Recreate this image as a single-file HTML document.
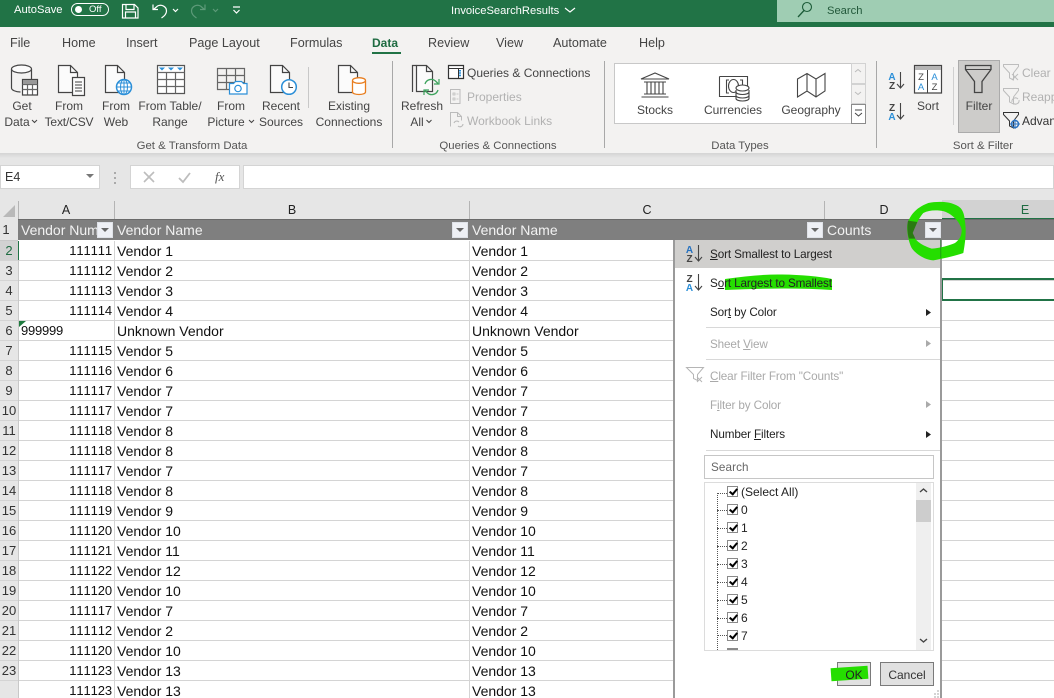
<!DOCTYPE html>
<html><head><meta charset="utf-8"><style>
html,body{margin:0;padding:0;width:1054px;height:698px;overflow:hidden}
body{position:relative;background:#fff;font-family:"Liberation Sans",sans-serif;color:#333}
div,span,svg{box-sizing:border-box}
.t{position:absolute;white-space:nowrap;line-height:14px;font-size:12px;color:#444}
.c{transform:translateX(-50%);text-align:center}
.tab{top:36px;font-size:12.6px;color:#444}
.g{font-size:11.4px;top:139px;color:#555}
.dis{color:#b1b1b1}
.box{position:absolute}
.r{position:absolute;left:0;width:1054px;height:20px;border-bottom:1px solid #d4d4d4;font-size:14px;line-height:20px;color:#111}
.r span{position:absolute;white-space:nowrap;top:0}
.h{left:0;width:18px;background:#e6e6e6;height:19px;text-align:center;font-size:13px;color:#333}
.a{right:942px;font-size:13px;font-kerning:none;letter-spacing:-.1px}
.b{left:117px}.cc{left:472px}
.fb{position:absolute;top:222px;width:16px;height:16px;background:#eef0f5;border:1px solid #dfe2e8}
.fb:after{content:"";position:absolute;left:3px;top:5px;border:4px solid transparent;border-top:4px solid #666;border-bottom:0}
.m{position:absolute;left:710px;font-size:11.7px;letter-spacing:-.12px;line-height:14px;color:#222;white-space:nowrap}
.m.dis{color:#a9a9a9}
.sep{position:absolute;left:706px;width:234px;height:1px;background:#d8d8d8}
.li{position:absolute;left:741px;font-size:12px;line-height:14px;color:#222;white-space:nowrap}
.cb{position:absolute;left:727px;width:11px;height:11px;border:1px solid #8a8a8a;background:#fff}
.cb:after{content:"";position:absolute;left:3px;top:0;width:3px;height:6px;border:solid #000;border-width:0 2px 2px 0;transform:rotate(40deg)}
</style></head><body>
<!-- title bar -->
<div class="box" style="left:0;top:0;width:1054px;height:27px;background:#217346"></div>
<div class="box" style="left:777px;top:0;width:277px;height:22px;background:#9fcdb3"></div>
<div class="t" style="left:14px;top:3px;color:#fff;font-size:11.2px">AutoSave</div>
<div class="box" style="left:71px;top:3px;width:38px;height:13px;border:1px solid #fff;border-radius:7px"></div>
<div class="box" style="left:75px;top:6px;width:7px;height:7px;background:#fff;border-radius:50%"></div>
<div class="t" style="left:89px;top:3px;color:#fff;font-size:9.5px">Off</div>
<div class="t" style="left:451px;top:4px;color:#fff;font-size:11.2px">InvoiceSearchResults</div>
<div class="t" style="left:827px;top:4px;color:#22583a;font-size:11.2px">Search</div>
<!-- ribbon -->
<div class="box" style="left:0;top:27px;width:1054px;height:126px;background:#f3f2f1"></div>
<div class="box" style="left:0;top:153px;width:1054px;height:47px;background:#e6e6e6"></div>
<div class="box" style="left:0;top:153px;width:1054px;height:5px;background:linear-gradient(#d4d4d4,#e6e6e6)"></div>
<div class="t tab" style="left:10px">File</div>
<div class="t tab" style="left:62px">Home</div>
<div class="t tab" style="left:126px">Insert</div>
<div class="t tab" style="left:189px">Page Layout</div>
<div class="t tab" style="left:290px">Formulas</div>
<div class="t tab" style="left:372px;color:#1e6b41;font-weight:bold;font-size:12px">Data</div>
<div class="box" style="left:372px;top:52px;width:29px;height:2px;background:#217346"></div>
<div class="t tab" style="left:428px">Review</div>
<div class="t tab" style="left:496px">View</div>
<div class="t tab" style="left:553px">Automate</div>
<div class="t tab" style="left:639px">Help</div>

<div class="t c" style="left:22px;top:99px">Get</div>
<div class="t c" style="left:17px;top:115px">Data</div>
<div class="t c" style="left:69px;top:99px">From</div>
<div class="t c" style="left:69px;top:115px;letter-spacing:-.15px">Text/CSV</div>
<div class="t c" style="left:116px;top:99px">From</div>
<div class="t c" style="left:116px;top:115px">Web</div>
<div class="t c" style="left:170px;top:99px">From Table/</div>
<div class="t c" style="left:170px;top:115px">Range</div>
<div class="t c" style="left:231px;top:99px">From</div>
<div class="t c" style="left:226px;top:115px">Picture</div>
<div class="t c" style="left:281px;top:99px">Recent</div>
<div class="t c" style="left:281px;top:115px">Sources</div>
<div class="t c" style="left:349px;top:99px">Existing</div>
<div class="t c" style="left:349px;top:115px">Connections</div>
<div class="t g c" style="left:192px">Get &amp; Transform Data</div>
<div class="t c" style="left:422px;top:99px">Refresh</div>
<div class="t c" style="left:417px;top:115px">All</div>
<div class="t" style="left:467px;top:66px">Queries &amp; Connections</div>
<div class="t dis" style="left:467px;top:90px">Properties</div>
<div class="t dis" style="left:467px;top:114px">Workbook Links</div>
<div class="t g c" style="left:498px">Queries &amp; Connections</div>
<div class="box" style="left:614px;top:63px;width:252px;height:61px;background:#fff;border:1px solid #c8c8c8;border-right:0"></div>
<div class="box" style="left:851px;top:63px;width:15px;height:21px;background:#f3f2f1;border:1px solid #d2d2d2"></div>
<div class="box" style="left:851px;top:84px;width:15px;height:20px;background:#f3f2f1;border:1px solid #d2d2d2"></div>
<div class="box" style="left:851px;top:104px;width:15px;height:20px;background:#fff;border:1px solid #8b8b8b"></div>
<div class="t c" style="left:655px;top:103px">Stocks</div>
<div class="t c" style="left:733px;top:103px">Currencies</div>
<div class="t c" style="left:811px;top:103px">Geography</div>
<div class="t g c" style="left:740px">Data Types</div>
<div class="t c" style="left:928px;top:99px">Sort</div>
<div class="box" style="left:958px;top:60px;width:42px;height:73px;background:#cdccca;border:1px solid #ababab"></div>
<div class="t c" style="left:979px;top:99px">Filter</div>
<div class="t dis" style="left:1022px;top:66px">Clear</div>
<div class="t dis" style="left:1022px;top:90px">Reapply</div>
<div class="t" style="left:1022px;top:114px;color:#333">Advanced</div>
<div class="t g c" style="left:983px">Sort &amp; Filter</div>

<!-- formula bar -->
<div class="box" style="left:0;top:165px;width:100px;height:24px;background:#fff;border:1px solid #d4d4d4"></div>
<div class="t" style="left:5px;top:170px;font-size:12.5px;color:#333">E4</div>
<div class="box" style="left:130px;top:165px;width:110px;height:24px;background:#fff;border:1px solid #d4d4d4"></div>
<div class="box" style="left:243px;top:165px;width:811px;height:24px;background:#fff;border:1px solid #d4d4d4"></div>

<!-- column headers -->
<div class="box" style="left:0;top:200px;width:1054px;height:20px;background:#e6e6e6"></div>
<div class="box" style="left:942px;top:200px;width:112px;height:20px;background:#d2d2d2"></div>
<div class="box" style="left:942px;top:218px;width:112px;height:2px;background:#217346"></div>
<div class="box" style="left:114px;top:201px;width:1px;height:19px;background:#b4b4b4"></div>
<div class="box" style="left:469px;top:201px;width:1px;height:19px;background:#b4b4b4"></div>
<div class="box" style="left:824px;top:201px;width:1px;height:19px;background:#b4b4b4"></div>
<div class="box" style="left:18px;top:201px;width:1px;height:19px;background:#b4b4b4"></div>
<div class="t c" style="left:66px;top:203px;font-size:12.5px;color:#222">A</div>
<div class="t c" style="left:292px;top:203px;font-size:12.5px;color:#222">B</div>
<div class="t c" style="left:647px;top:203px;font-size:12.5px;color:#222">C</div>
<div class="t c" style="left:884px;top:203px;font-size:12.5px;color:#222">D</div>
<div class="t c" style="left:1025px;top:203px;font-size:12.5px;color:#1e6b41">E</div>

<!-- rows -->
<div class="box" style="left:0;top:220px;width:18px;height:21px;background:#e6e6e6;border-bottom:1px solid #c8c8c8"></div>
<div class="t c" style="left:6px;top:223px;font-size:13px;color:#333">1</div>
<div class="box" style="left:18px;top:219px;width:1036px;height:21px;background:#7f7f7f;border-top:1px solid #6a6a6a"></div>
<div class="t" style="left:21px;top:223px;width:77px;overflow:hidden;font-size:14px;color:#f2f2f2">Vendor Number</div>
<div class="t" style="left:117px;top:223px;font-size:14px;color:#f2f2f2">Vendor Name</div>
<div class="t" style="left:472px;top:223px;font-size:14px;color:#f2f2f2">Vendor Name</div>
<div class="t" style="left:827px;top:223px;font-size:14px;color:#f2f2f2">Counts</div>
<div class="fb" style="left:97px"></div><div class="fb" style="left:452px"></div><div class="fb" style="left:807px"></div><div class="fb" style="left:925px"></div>

<div class="r" style="top:241px"><span class="h" style="background:#d2d2d2;color:#1e6b41">2</span><span class="a">111111</span><span class="b">Vendor 1</span><span class="cc">Vendor 1</span></div>
<div class="r" style="top:261px"><span class="h">3</span><span class="a">111112</span><span class="b">Vendor 2</span><span class="cc">Vendor 2</span></div>
<div class="r" style="top:281px"><span class="h">4</span><span class="a">111113</span><span class="b">Vendor 3</span><span class="cc">Vendor 3</span></div>
<div class="r" style="top:301px"><span class="h">5</span><span class="a">111114</span><span class="b">Vendor 4</span><span class="cc">Vendor 4</span></div>
<div class="r" style="top:321px"><span class="h">6</span><span style="left:21px;font-size:13px;letter-spacing:-.23px">999999</span><span class="b">Unknown Vendor</span><span class="cc">Unknown Vendor</span></div>
<div class="r" style="top:341px"><span class="h">7</span><span class="a">111115</span><span class="b">Vendor 5</span><span class="cc">Vendor 5</span></div>
<div class="r" style="top:361px"><span class="h">8</span><span class="a">111116</span><span class="b">Vendor 6</span><span class="cc">Vendor 6</span></div>
<div class="r" style="top:381px"><span class="h">9</span><span class="a">111117</span><span class="b">Vendor 7</span><span class="cc">Vendor 7</span></div>
<div class="r" style="top:401px"><span class="h">10</span><span class="a">111117</span><span class="b">Vendor 7</span><span class="cc">Vendor 7</span></div>
<div class="r" style="top:421px"><span class="h">11</span><span class="a">111118</span><span class="b">Vendor 8</span><span class="cc">Vendor 8</span></div>
<div class="r" style="top:441px"><span class="h">12</span><span class="a">111118</span><span class="b">Vendor 8</span><span class="cc">Vendor 8</span></div>
<div class="r" style="top:461px"><span class="h">13</span><span class="a">111117</span><span class="b">Vendor 7</span><span class="cc">Vendor 7</span></div>
<div class="r" style="top:481px"><span class="h">14</span><span class="a">111118</span><span class="b">Vendor 8</span><span class="cc">Vendor 8</span></div>
<div class="r" style="top:501px"><span class="h">15</span><span class="a">111119</span><span class="b">Vendor 9</span><span class="cc">Vendor 9</span></div>
<div class="r" style="top:521px"><span class="h">16</span><span class="a">111120</span><span class="b">Vendor 10</span><span class="cc">Vendor 10</span></div>
<div class="r" style="top:541px"><span class="h">17</span><span class="a">111121</span><span class="b">Vendor 11</span><span class="cc">Vendor 11</span></div>
<div class="r" style="top:561px"><span class="h">18</span><span class="a">111122</span><span class="b">Vendor 12</span><span class="cc">Vendor 12</span></div>
<div class="r" style="top:581px"><span class="h">19</span><span class="a">111120</span><span class="b">Vendor 10</span><span class="cc">Vendor 10</span></div>
<div class="r" style="top:601px"><span class="h">20</span><span class="a">111117</span><span class="b">Vendor 7</span><span class="cc">Vendor 7</span></div>
<div class="r" style="top:621px"><span class="h">21</span><span class="a">111112</span><span class="b">Vendor 2</span><span class="cc">Vendor 2</span></div>
<div class="r" style="top:641px"><span class="h">22</span><span class="a">111120</span><span class="b">Vendor 10</span><span class="cc">Vendor 10</span></div>
<div class="r" style="top:661px"><span class="h">23</span><span class="a">111123</span><span class="b">Vendor 13</span><span class="cc">Vendor 13</span></div>
<div class="r" style="top:681px"><span class="h"></span><span class="a">111123</span><span class="b">Vendor 13</span><span class="cc">Vendor 13</span></div>

<div class="box" style="left:18px;top:241px;width:1px;height:457px;background:#c8c8c8"></div>
<div class="box" style="left:18px;top:241px;width:1px;height:19px;background:#217346"></div>
<div class="box" style="left:114px;top:241px;width:1px;height:457px;background:#d4d4d4"></div>
<div class="box" style="left:469px;top:241px;width:1px;height:457px;background:#d4d4d4"></div>
<div class="box" style="left:941px;top:278px;width:113px;height:23px;border:2px solid #217346;border-right:0"></div>

<!-- filter menu -->
<div class="box" style="left:673px;top:240px;width:269px;height:458px;background:#fff;border-left:2px solid #9a9a9a;border-right:2px solid #9a9a9a"></div>
<div class="box" style="left:675px;top:240px;width:265px;height:28px;background:#d0cfcd"></div>
<div class="m" style="top:248px"><u>S</u>ort Smallest to Largest</div>
<svg width="120" height="24" viewBox="720 270 120 24" style="position:absolute;left:720px;top:270px"><path fill="#25de00" d="M725 279Q760 274 782 274.500Q812 275 832 279L832 290Q790 287 725 290z"/></svg>
<div class="m" style="top:277px">S<u>o</u>rt Largest to Smallest</div>
<div class="m" style="top:306px">Sor<u>t</u> by Color</div>
<div class="sep" style="top:327px"></div>
<div class="m dis" style="top:338px">Sheet <u>V</u>iew</div>
<div class="sep" style="top:359px"></div>
<div class="m dis" style="top:370px"><u>C</u>lear Filter From "Counts"</div>
<div class="m dis" style="top:399px">F<u>i</u>lter by Color</div>
<div class="m" style="top:428px">Number <u>F</u>ilters</div>
<div class="sep" style="top:450px"></div>
<div class="box" style="left:704px;top:455px;width:230px;height:24px;border:1px solid #c6c6c6;background:#fff"></div>
<div class="m" style="left:711px;top:461px;color:#666;letter-spacing:.1px">Search</div>
<div class="box" style="left:704px;top:482px;width:230px;height:169px;border:1px solid #dcdcdc;background:#fff"></div>
<div class="box" style="left:916px;top:483px;width:15px;height:167px;background:#efefef"></div>
<div class="box" style="left:916px;top:500px;width:15px;height:22px;background:#cdcdcd"></div>
<div class="box" style="left:717px;top:493px;width:0;height:157px;border-left:1px dotted #555"></div>
<div class="box" style="left:717px;top:493px;width:10px;border-top:1px dotted #555"></div>
<div class="box" style="left:717px;top:510px;width:10px;border-top:1px dotted #555"></div>
<div class="box" style="left:717px;top:528px;width:10px;border-top:1px dotted #555"></div>
<div class="box" style="left:717px;top:546px;width:10px;border-top:1px dotted #555"></div>
<div class="box" style="left:717px;top:564px;width:10px;border-top:1px dotted #555"></div>
<div class="box" style="left:717px;top:582px;width:10px;border-top:1px dotted #555"></div>
<div class="box" style="left:717px;top:600px;width:10px;border-top:1px dotted #555"></div>
<div class="box" style="left:717px;top:618px;width:10px;border-top:1px dotted #555"></div>
<div class="box" style="left:717px;top:635px;width:10px;border-top:1px dotted #555"></div>
<div class="cb" style="top:486px"></div><div class="li" style="top:485px">(Select All)</div>
<div class="cb" style="top:504px"></div><div class="li" style="top:503px">0</div>
<div class="cb" style="top:522px"></div><div class="li" style="top:521px">1</div>
<div class="cb" style="top:540px"></div><div class="li" style="top:539px">2</div>
<div class="cb" style="top:558px"></div><div class="li" style="top:557px">3</div>
<div class="cb" style="top:576px"></div><div class="li" style="top:575px">4</div>
<div class="cb" style="top:594px"></div><div class="li" style="top:593px">5</div>
<div class="cb" style="top:612px"></div><div class="li" style="top:611px">6</div>
<div class="cb" style="top:630px"></div><div class="li" style="top:629px">7</div>
<div class="box" style="left:727px;top:648px;width:11px;height:2px;background:#8a8a8a"></div>
<div class="box" style="left:837px;top:662px;width:34px;height:24px;background:#e1e1e1;border:1px solid #7a7a7a"></div>
<div class="box" style="left:880px;top:662px;width:54px;height:24px;background:#e1e1e1;border:1px solid #7a7a7a"></div>
<div class="box" style="left:831px;top:667px;width:37px;height:13px;background:#25de00;transform:rotate(-4deg)"></div>
<div class="t c" style="left:854px;top:668px;color:#222;font-size:12px">OK</div>
<div class="t c" style="left:907px;top:668px;color:#333;font-size:12px">Cancel</div>

<!-- icons overlay -->
<svg width="1054" height="698" viewBox="0 0 1054 698" style="position:absolute;left:0;top:0" fill="none">
<!-- QAT -->
<g stroke="#fff" stroke-width="1.2">
<path d="M122.500 4.500h12l3.500 3.500v10h-15.500z"/><path d="M126 4.500v5h8v-5M125.500 18v-6h10v6"/>
<path d="M153 4.500v5h5M153.500 9.500l4-3.500c4-2 9 .5 9 5 0 3-2 5-5 7"/>
<path d="M173 9l2.500 2.500L178 9"/>
<path d="M233 7h7M233.500 10l3 3 3-3"/>
<path d="M565 8l5 4 5-4"/>
</g>
<g stroke="#5d9a79" stroke-width="1.2">
<path d="M205 4.500v5h-5M204.500 9.500l-4-3.500c-4-2-9 .5-9 5 0 3 2 5 5 7"/><path d="M213 9l2.500 2.500L218 9"/>
</g>
<circle cx="807" cy="7" r="4.500" stroke="#1d5c39" stroke-width="1.100"/><path d="M804 10.500L798 17" stroke="#1d5c39" stroke-width="1.300"/>

<!-- Get data -->
<g stroke="#444" stroke-width="1.200">
<ellipse cx="21.500" cy="69" rx="10" ry="4" fill="#fbfbfb"/><path d="M11.500 69v19c0 2 4 4 9 4M31.500 69v10"/>
<path d="M22.500 79.500h15v15.500h-15z" fill="#fff"/><path d="M22.500 84.500h15M22.500 89.500h15M27.500 84.500v10M32.500 84.500v10" stroke="#666"/>
</g>
<path d="M23 80h14v4H23z" fill="#999"/>
<!-- docs -->
<g stroke="#444" stroke-width="1.200" fill="#fbfbfb">
<path d="M58.500 65.500h12l7 7v20h-19z"/><path d="M70.500 65.500v7h7" fill="none"/>
<path d="M72.500 77.500h12v18h-12z"/><path d="M75 82h7M75 85h7M75 88h7M75 91h7" fill="none" stroke="#666"/>
<path d="M105.500 65.500h12l7 7v20h-19z"/><path d="M117.500 65.500v7h7" fill="none"/>
<path d="M270.500 65.500h12l7 7v20h-19z"/><path d="M282.500 65.500v7h7" fill="none"/>
<path d="M338.500 65.500h12l7 7v20h-19z"/><path d="M350.500 65.500v7h7" fill="none"/>
<path d="M416.500 65.500h10l6 6v20h-16z"/><path d="M426.500 65.500v6h6" fill="none"/>
</g>
<path d="M412.500 92V65.500h4" stroke="#444" stroke-width="1.200"/>
<!-- globe -->
<circle cx="124" cy="87" r="7.500" fill="#fff" stroke="#2b8fd8" stroke-width="1.500"/>
<path d="M116.500 87h15M124 79.500v15M118 83h12M118 91h12" stroke="#2b8fd8"/><ellipse cx="124" cy="87" rx="3.500" ry="7.500" stroke="#2b8fd8"/>
<!-- table -->
<path d="M157.500 65.500h27v28h-27z" fill="#fff" stroke="#555" stroke-width="1.200"/>
<path d="M157.500 72.500h27M157.500 79.500h27M157.500 86.500h27M166.500 72.500v21M175.500 72.500v21" stroke="#666" stroke-width="1.200"/>
<path d="M159 67.500h6l-3 3zM168 67.500h6l-3 3zM177 67.500h6l-3 3z" fill="#2b8fd8"/>
<!-- picture -->
<path d="M217.500 68.500h27v21h-27zM217.500 75.500h27M217.500 82.500h27M226.500 68.500v21M235.500 68.500v21" stroke="#666" stroke-width="1.200" fill="none"/>
<path d="M229.500 83.500h4l2-2h6l2 2h3.500v10.500h-17.500z" fill="#fff" stroke="#2b8fd8" stroke-width="1.200"/><circle cx="238" cy="88.500" r="3.200" stroke="#2b8fd8" stroke-width="1.200"/>
<!-- clock -->
<circle cx="289" cy="87" r="7.300" fill="#fff" stroke="#2b8fd8" stroke-width="1.500"/><path d="M289 82.500v5h4" stroke="#444" stroke-width="1.100"/>
<!-- orange cyl -->
<path d="M352.500 81v11c0 1.500 3 2.500 6.500 2.500s6.500-1 6.500-2.500V81" fill="#fff" stroke="#e87d1e" stroke-width="1.300"/><ellipse cx="359" cy="80.500" rx="6.500" ry="2.800" fill="#fff" stroke="#e87d1e" stroke-width="1.300"/>
<!-- separators -->
<path d="M308.500 67v41" stroke="#c8c8c8"/>
<path d="M392.500 61v87M604.500 61v87M876.500 61v87" stroke="#a8a8a8"/>
<path d="M953.500 67v58" stroke="#d0d0d0"/>
<!-- chevrons -->
<path d="M32 120l2.500 2.500L37 120M249 120l2.500 2.500L254 120M426.500 120l2.500 2.500L431.500 120" stroke="#444"/>
<!-- refresh arrows -->
<path d="M425 84a6.500 6.500 0 0 1 11-2.500l2 2M438 90a6.500 6.500 0 0 1-11 2.500l-2-2" stroke="#3da35d" stroke-width="1.300"/>
<path d="M439 79v5h-5M424 95v-5h5" stroke="#3da35d" stroke-width="1.200"/>
<!-- queries -->
<path d="M448.500 65.500h15v13h-15z" fill="#fff" stroke="#333" stroke-width="1.200"/><path d="M448.500 68.500h15M458.500 68.500v10" stroke="#333"/><path d="M460 70v7" stroke="#2b8fd8" stroke-width="2" stroke-dasharray="1.500 .8"/>
<!-- properties -->
<path d="M450.500 89.500h9.500v14h-9.500z" stroke="#bbb"/><path d="M453 93h2v2h-2zM453 98h2v2h-2zM456.500 94h2M456.500 99h2" stroke="#bbb" stroke-width=".8"/>
<!-- workbook links -->
<path d="M450.500 126.500v-14h7l4 4v4M457.500 112.500v4h4" stroke="#bbb"/><path d="M454 123a3 3 0 0 1 5-1M463 124a3 3 0 0 1-5 2" stroke="#bbb" stroke-width="1.100"/>
<!-- stocks -->
<g stroke="#444" stroke-width="1.100">
<path d="M641 79l14-6 14 6zM644 82h22M644 94h22M641.500 97h27M647 82v12M651 82v12M655 82v12M659 82v12M663 82v12"/>
<!-- currencies -->
<path d="M719.500 76.500h28v20h-22" /><path d="M719.500 76.500v20h6"/><path d="M729 80h-2.500v13h2.500M740 80h2.500v6"/><ellipse cx="733.500" cy="86" rx="5" ry="6.500"/>
<path d="M736 90v8.500c0 1.500 3 2.500 6.500 2.500s6.500-1 6.500-2.500V90" fill="#fff"/><ellipse cx="742.500" cy="88" rx="6.500" ry="3" fill="#fff"/><path d="M736 92c0 1.500 3 2.500 6.500 2.500S749 93.500 749 92M736 95.500c0 1.500 3 2.500 6.500 2.500s6.500-1 6.500-2.500"/>
<!-- geography -->
<path d="M797.500 79l9.500-5.500 9 5.500 9-5.500v17.500l-9 6-9-6-9.500 6zM807 73.500v17M816 79v18"/>
</g>
<path d="M855 72l3 -2.500 3 2.500M855 92l3 2.500 3-2.500" stroke="#bbb"/>
<path d="M855 110h7M855 113l3.500 3 3.500-3" stroke="#444"/>
<!-- sort arrows -->
<g font-family="Liberation Sans,sans-serif" font-weight="bold" font-size="10" text-anchor="middle">
<text x="892" y="80" fill="#2b8fd8">A</text><text x="892" y="89" fill="#444">Z</text>
<text x="892" y="111" fill="#444">Z</text><text x="892" y="120" fill="#2b8fd8">A</text>
<text x="689.500" y="253" fill="#2672c0">A</text><text x="689.500" y="262" fill="#444">Z</text>
<text x="689.500" y="282" fill="#444">Z</text><text x="689.500" y="291" fill="#2b8fd8">A</text>
</g>
<path d="M900.500 72v16M897 84l3.500 4 3.500-4M900.500 103v16M897 115l3.500 4 3.500-4M698.500 245v16M695 257l3.500 4 3.500-4M698.500 274v16M695 286l3.500 4 3.500-4" stroke="#444" stroke-width="1.100"/>
<!-- sort big -->
<path d="M914.500 65.500h27v27.500h-27z" fill="#fff" stroke="#444" stroke-width="1.200"/><path d="M915 66h26v4h-26z" fill="#b5b5b5"/><path d="M927.500 70v23" stroke="#444"/>
<g font-family="Liberation Sans,sans-serif" font-size="9.500" text-anchor="middle">
<text x="921" y="80" fill="#444">Z</text><text x="921" y="90" fill="#2b8fd8">A</text>
<text x="934.500" y="80" fill="#2b8fd8">A</text><text x="934.500" y="90" fill="#444">Z</text>
</g>
<!-- funnel -->
<path d="M965.500 65.500h25.500v4l-9 12v11h-7.500v-11l-9-12z" stroke="#444" stroke-width="1.300"/><path d="M965.500 69.500h25.500" stroke="#444"/>
<!-- clear, reapply, advanced -->
<path d="M1003.500 64.500h15v2l-5 6.500v7l-4-2v-5l-6-6.500z" stroke="#bdbdbd"/><path d="M1012 74l6 6m0-6l-6 6" stroke="#bdbdbd"/>
<path d="M1003.500 88.500h15v2l-5 6.500v7l-4-2v-5l-6-6.500z" stroke="#bdbdbd"/><path d="M1012 102a3.500 3.500 0 0 1 6-3M1019 100a3.500 3.500 0 0 1-6 3" stroke="#bdbdbd"/>
<path d="M1003.500 112.500h15v2l-5 6.500v7l-4-2v-5l-6-6.500z" stroke="#333"/><circle cx="1015" cy="124" r="3.500" stroke="#2b72c0" stroke-width="1.500"/><path d="M1015 119v10M1010 124h10" stroke="#2b72c0"/>
<!-- fx etc -->
<path d="M144 172l10 10m0-10l-10 10" stroke="#bdbdbd" stroke-width="1.600"/>
<path d="M179 178l4 4 7-9" stroke="#bdbdbd" stroke-width="1.800"/>
<text x="215" y="181" font-family="Liberation Serif,serif" font-style="italic" font-size="13" fill="#555">fx</text>
<path d="M115 172v2M115 177v2M115 182v2" stroke="#aaa" stroke-width="2"/>
<path d="M86 174h8l-4 4z" fill="#777"/>
<path d="M3 217h12v-12z" fill="#b9b9b9"/>
<path d="M19 321h7l-7 6z" fill="#1e7a3e"/>
<!-- menu icons -->
<path d="M686.500 367.500h17l-6 7v6l-4-2v-4z" stroke="#b5b5b5"/><path d="M697 377l5 5m0-5l-5 5" stroke="#b5b5b5"/>
<path d="M926 309l5 3.500-5 3.500zM926 431l5 3.500-5 3.500z" fill="#222"/>
<path d="M926 340l5 3.500-5 3.500zM926 401l5 3.500-5 3.500z" fill="#aaa"/>
<path d="M920 492l3.500-3 3.500 3M920 639l3.500 3 3.500-3" stroke="#444" stroke-width="1.400"/>
<path d="M934 694h2M937 694h2M937 691h2M937 697h2M934 697h2" stroke="#aaa"/>
</svg>

<!-- green circle -->
<svg width="80" height="70" viewBox="0 0 240 210" style="position:absolute;left:900px;top:198px">
<path fill-rule="evenodd" fill="#25de00" d="M85 15C110 10 145 10 165 20C185 28 192 40 195 70C199 100 197 125 190 165C170 172 130 182 100 187C70 185 45 165 35 150C25 130 20 100 22 80C28 55 45 30 85 15ZM70 45C58 58 42 90 38 105C42 125 60 140 95 152C120 150 150 142 165 135C178 125 185 115 185 95C180 70 150 40 120 38C100 36 85 38 70 45Z"/>
<path fill="#2a7a12" d="M24 68L52 72 38 105 46 122 27 122C22 105 21 85 24 68z"/>
<path d="M122.500 125v55" stroke="#1a7a20" stroke-width="2"/>
</svg>
</body></html>
